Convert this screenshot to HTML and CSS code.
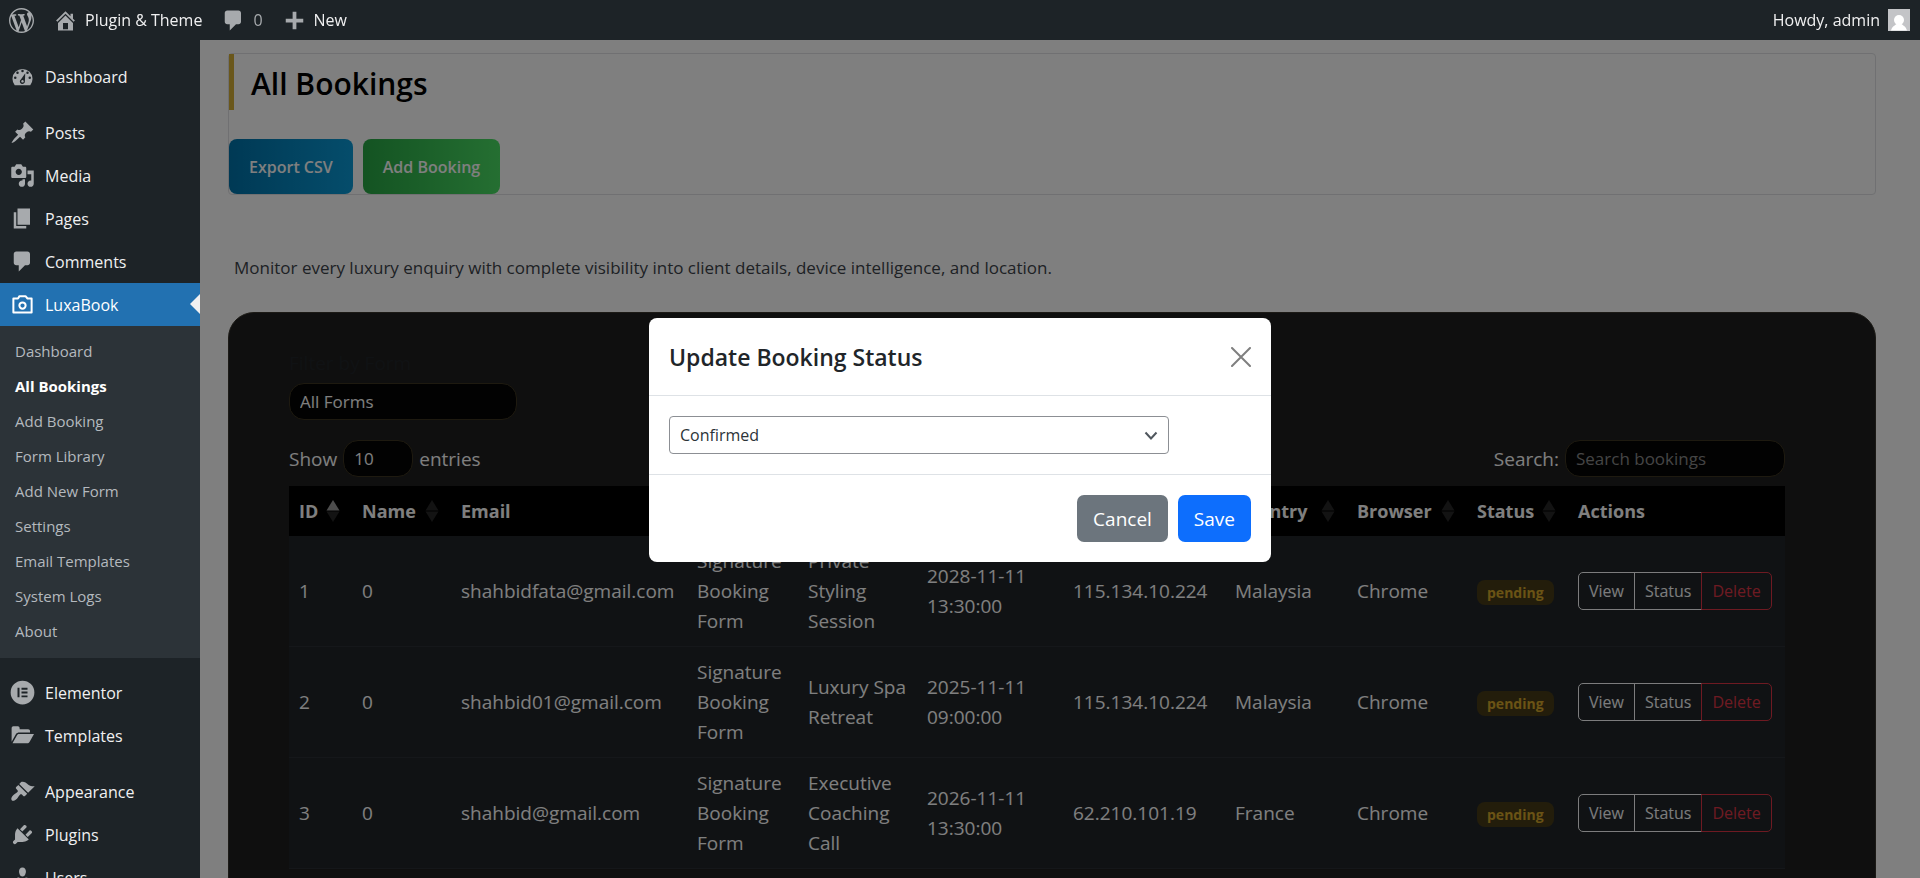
FILE: index.html
```html
<!DOCTYPE html>
<html lang="en">
<head>
<meta charset="utf-8">
<title>All Bookings</title>
<link rel="stylesheet" href="styles.css">
</head>
<body>
<header class="topbar">
  <nav class="topbar-links" aria-label="Toolbar">
    <a href="#" class="tb tb-logo" aria-label="About WordPress"><svg class="ico" viewBox="0 0 20 20"><path d="M20 10c0-5.51-4.49-10-10-10C4.48 0 0 4.49 0 10c0 5.52 4.48 10 10 10 5.51 0 10-4.48 10-10zM7.78 15.37L4.37 6.22c.55-.02 1.17-.08 1.17-.08.5-.06.44-1.13-.06-1.11 0 0-1.45.11-2.37.11-.18 0-.37 0-.58-.01C4.12 2.69 6.87 1.11 10 1.11c2.33 0 4.45.87 6.05 2.34-.68-.11-1.65.39-1.65 1.58 0 .74.45 1.36.9 2.1.35.61.55 1.36.55 2.46 0 1.49-1.4 5-1.4 5l-3.03-8.37c.54-.02.82-.17.82-.17.5-.05.44-1.25-.06-1.22 0 0-1.44.12-2.38.12-.87 0-2.33-.12-2.33-.12-.5-.03-.56 1.2-.06 1.22l.92.08 1.26 3.41zM17.41 10c.24-.64.74-1.87.43-4.25.7 1.29 1.05 2.71 1.05 4.25 0 3.29-1.73 6.24-4.4 7.78.97-2.59 1.94-5.2 2.92-7.78zM6.1 18.09C3.12 16.65 1.11 13.53 1.11 10c0-1.3.23-2.48.72-3.59C3.25 10.3 4.67 14.2 6.1 18.09zm4.03-6.63l2.58 6.98c-.86.29-1.76.45-2.71.45-.79 0-1.57-.11-2.29-.33.81-2.38 1.62-4.74 2.42-7.1z"/></svg></a>
    <a href="#" class="tb"><svg class="ico" viewBox="0 0 20 20"><path d="M16 8.5l1.53 1.53-1.06 1.06L10 4.6l-6.47 6.49-1.06-1.06L10 2.5l4 4v-2h2v4zm-6-2.46l6 5.99V18H4v-5.97zM12 17v-5H8v5h4z"/></svg><span>Plugin &amp; Theme</span></a>
    <a href="#" class="tb tb-count"><svg class="ico" viewBox="0 0 20 20"><path d="M5 2h9c1.1 0 2 .9 2 2v7c0 1.1-.9 2-2 2h-2l-5 5v-5H5c-1.1 0-2-.9-2-2V4c0-1.1.9-2 2-2z"/></svg><span>0</span></a>
    <a href="#" class="tb"><svg class="ico" viewBox="0 0 20 20"><path d="M17 8.500v3h-5.500v5.500h-3v-5.500H3v-3h5.500V3h3v5.500z"/></svg><span>New</span></a>
  </nav>
  <a href="#" class="tb tb-user"><span>Howdy, admin</span><svg class="avatar" viewBox="0 0 22 22"><path fill="#c3c4c7" d="M0 0h22v22H0z"/><circle cx="11" cy="11" r="5" fill="#fff"/><path fill="#fff" d="M3 21.500c1-4 4-5 5.500-6.500h5c1.500 1.500 4.500 2.500 5.500 6.500z"/></svg></a>
</header>

<nav class="sidebar" aria-label="Main menu">
  <ul class="menu">
    <li><a href="#" class="item"><svg class="ico" viewBox="0 0 20 20"><path fill-rule="evenodd" d="M3.800 17h12.400A8 8 0 1 0 3.800 17zM10 4.500a1 1 0 1 1 0 2 1 1 0 0 1 0-2zM6 6a1 1 0 1 1 0 2 1 1 0 0 1 0-2zM14 6a1 1 0 1 1 0 2 1 1 0 0 1 0-2zM4.200 10a1 1 0 1 1 0 2 1 1 0 0 1 0-2zM15.800 10a1 1 0 1 1 0 2 1 1 0 0 1 0-2zM12.200 7.300l-.3 6.500a2 2 0 1 1-3.200-1.500zM10 12.800a1 1 0 1 0 .01 0z"/></svg>Dashboard</a></li>
  </ul>
  <ul class="menu">
    <li><a href="#" class="item"><svg class="ico" viewBox="0 0 20 20"><path d="M10.440 3.020l1.820-1.820 6.360 6.350-1.830 1.820c-1.050-.68-2.480-.57-3.410.36l-.75.75c-.92.93-1.040 2.350-.35 3.410l-1.830 1.820-2.410-2.410-2.800 2.790c-.42.42-3.380 2.710-3.800 2.290s1.860-3.390 2.280-3.810l2.790-2.790L4.100 9.360l1.830-1.820c1.050.69 2.480.57 3.400-.36l.75-.75c.93-.92 1.050-2.350.36-3.410z"/></svg>Posts</a></li>
    <li><a href="#" class="item"><svg class="ico" viewBox="0 0 20 20"><path d="M13 11V4c0-.55-.45-1-1-1h-1.670L9 1H5L3.670 3H2c-.55 0-1 .45-1 1v7c0 .55.45 1 1 1h10c.55 0 1-.45 1-1zM7 4.500c1.380 0 2.500 1.120 2.500 2.500S8.380 9.500 7 9.500 4.500 8.380 4.500 7 5.620 4.500 7 4.500zM14 6h5v10.500c0 1.380-1.120 2.500-2.500 2.500S14 17.880 14 16.500s1.120-2.500 2.500-2.500c.17 0 .34.02.5.05V9h-3V6zm-4 8.050V13h2v3.500c0 1.380-1.120 2.500-2.500 2.500S7 17.880 7 16.500 8.120 14 9.500 14c.17 0 .34.02.5.05z"/></svg>Media</a></li>
    <li><a href="#" class="item"><svg class="ico" viewBox="0 0 20 20"><path d="M6 15V2h10v13H6zm-1 1h8v2H3V5h2v11z"/></svg>Pages</a></li>
    <li><a href="#" class="item"><svg class="ico" viewBox="0 0 20 20"><path d="M5 2h9c1.100 0 2 .9 2 2v7c0 1.100-.9 2-2 2h-2l-5 5v-5H5c-1.100 0-2-.9-2-2V4c0-1.100.9-2 2-2z"/></svg>Comments</a></li>
    <li><a href="#" class="item item-current" aria-current="true"><svg class="ico ico-line" viewBox="0 0 20 20"><path d="M2.700 5.200h3.700l1.200-1.900h4.800l1.600 1.900h3.300v11.100H2.700z"/><circle cx="10" cy="10.800" r="2.500"/></svg>LuxaBook</a>
      <ul class="submenu">
        <li><a href="#">Dashboard</a></li>
        <li><a href="#" class="on" aria-current="page">All Bookings</a></li>
        <li><a href="#">Add Booking</a></li>
        <li><a href="#">Form Library</a></li>
        <li><a href="#">Add New Form</a></li>
        <li><a href="#">Settings</a></li>
        <li><a href="#">Email Templates</a></li>
        <li><a href="#">System Logs</a></li>
        <li><a href="#">About</a></li>
      </ul>
    </li>
  </ul>
  <ul class="menu">
    <li><a href="#" class="item"><svg class="ico" viewBox="0 0 20 20"><path fill-rule="evenodd" d="M10 .5a9.500 9.500 0 1 1 0 19 9.500 9.500 0 0 1 0-19zM6 6.200v7.600h1.600V6.200zm3.200 0v1.500H14V6.200zm0 3v1.500H14V9.200zm0 3.100v1.500H14v-1.500z"/></svg>Elementor</a></li>
    <li><a href="#" class="item"><svg class="ico" viewBox="0 0 20 20"><path d="M1.300 15V4c0-.8.6-1.500 1.400-1.500h3.600c.8 0 1.400.7 1.400 1.500v1h6.800c.9 0 1.500.6 1.500 1.400v1.200H7.300c-1 0-1.900.4-2.500 1.200z"/><path d="M2 16.200l3.600-6.400c.4-.7.900-1 1.700-1h11.900l-3.600 6.300c-.4.700-1 1.100-1.800 1.100z"/></svg>Templates</a></li>
  </ul>
  <ul class="menu">
    <li><a href="#" class="item"><svg class="ico" viewBox="0 0 20 20"><path d="M14.480 11.060L7.410 3.990l1.500-1.500c.5-.56 2.300-.47 3.510.32 1.210.8 1.430 1.280 2.910 2.100 1.180.64 2.450 1.260 4.450.85zm-.71.71L6.700 4.700 4.930 6.470c-.39.39-.39 1.020 0 1.410l1.060 1.060c.39.39.39 1.030 0 1.420-.6.6-1.430 1.110-2.210 1.690-.35.26-.7.53-1.010.84C1.430 14.230.4 16.080 1.400 17.070c.99 1 2.840-.03 4.180-1.360.31-.31.58-.66.85-1.020.57-.78 1.080-1.610 1.690-2.210.39-.39 1.020-.39 1.410 0l1.060 1.060c.39.39 1.020.39 1.410 0z"/></svg>Appearance</a></li>
    <li><a href="#" class="item"><svg class="ico" viewBox="0 0 20 20"><path d="M13.110 4.360L9.870 7.600 8 5.730l3.240-3.240c.35-.34 1.050-.2 1.560.32.52.51.66 1.210.31 1.550zm-8 1.770l.91-1.120 9.010 9.010-1.190.84c-.71.71-2.630 1.160-3.820 1.160H6.140L4.900 17.260c-.59.59-1.540.59-2.120 0-.59-.58-.59-1.530 0-2.120l1.240-1.240v-3.880c0-1.130.4-3.190 1.090-3.890zm7.260 3.970l3.240-3.240c.34-.35 1.040-.21 1.550.31.52.51.66 1.210.31 1.550l-3.240 3.250z"/></svg>Plugins</a></li>
    <li><a href="#" class="item"><svg class="ico" viewBox="0 0 20 20"><path d="M10 9.250c-2.270 0-2.730-3.440-2.730-3.440C7 4.020 7.820 2 9.970 2c2.160 0 2.980 2.020 2.710 3.810 0 0-.41 3.440-2.680 3.440zm0 2.570L12.720 10c2.390 0 4.520 2.330 4.520 4.530v2.490s-3.650 1.130-7.240 1.130c-3.650 0-7.240-1.130-7.240-1.130v-2.490c0-2.250 1.940-4.480 4.470-4.480z"/></svg>Users</a></li>
  </ul>
</nav>

<main class="content">
  <section class="page-head">
    <h1 class="page-title">All Bookings</h1>
    <div class="page-actions">
      <button type="button" class="cta cta-blue">Export CSV</button>
      <button type="button" class="cta cta-green">Add Booking</button>
    </div>
  </section>
  <p class="intro">Monitor every luxury enquiry with complete visibility into client details, device intelligence, and location.</p>

  <section class="panel">
    <div class="filter">
      <label for="form-filter" class="filter-label">Filter by Form</label>
      <select id="form-filter" class="dark-field filter-select"><option>All Forms</option></select>
    </div>
    <div class="controls">
      <div class="length">
        <label for="page-length">Show</label>
        <select id="page-length" class="dark-field length-select"><option>10</option></select>
        <span>entries</span>
      </div>
      <div class="search">
        <label for="search">Search:</label>
        <input id="search" type="search" class="dark-field search-input" placeholder="Search bookings">
      </div>
    </div>
    <table class="bookings">
      <colgroup><col class="c-id"><col class="c-name"><col class="c-email"><col class="c-form"><col class="c-service"><col class="c-date"><col class="c-ip"><col class="c-country"><col class="c-browser"><col class="c-status"><col class="c-actions"></colgroup>
      <thead>
        <tr>
          <th><div class="th">ID<svg class="sort sort-asc" viewBox="0 0 14 22"><path class="up" d="M7 0l6.500 10.500H.5z"/><path class="down" d="M7 22L.5 11.500h13z"/></svg></div></th>
          <th><div class="th">Name<svg class="sort" viewBox="0 0 14 22"><path class="up" d="M7 0l6.500 10.500H.5z"/><path class="down" d="M7 22L.5 11.500h13z"/></svg></div></th>
          <th><div class="th">Email<svg class="sort" viewBox="0 0 14 22"><path class="up" d="M7 0l6.500 10.500H.5z"/><path class="down" d="M7 22L.5 11.500h13z"/></svg></div></th>
          <th><div class="th">Form<svg class="sort" viewBox="0 0 14 22"><path class="up" d="M7 0l6.500 10.500H.5z"/><path class="down" d="M7 22L.5 11.500h13z"/></svg></div></th>
          <th><div class="th">Service<svg class="sort" viewBox="0 0 14 22"><path class="up" d="M7 0l6.500 10.500H.5z"/><path class="down" d="M7 22L.5 11.500h13z"/></svg></div></th>
          <th><div class="th">Date<svg class="sort" viewBox="0 0 14 22"><path class="up" d="M7 0l6.500 10.500H.5z"/><path class="down" d="M7 22L.5 11.500h13z"/></svg></div></th>
          <th><div class="th">IP<svg class="sort" viewBox="0 0 14 22"><path class="up" d="M7 0l6.500 10.500H.5z"/><path class="down" d="M7 22L.5 11.500h13z"/></svg></div></th>
          <th><div class="th">Country<svg class="sort" viewBox="0 0 14 22"><path class="up" d="M7 0l6.500 10.500H.5z"/><path class="down" d="M7 22L.5 11.500h13z"/></svg></div></th>
          <th><div class="th">Browser<svg class="sort" viewBox="0 0 14 22"><path class="up" d="M7 0l6.500 10.500H.5z"/><path class="down" d="M7 22L.5 11.500h13z"/></svg></div></th>
          <th><div class="th">Status<svg class="sort" viewBox="0 0 14 22"><path class="up" d="M7 0l6.500 10.500H.5z"/><path class="down" d="M7 22L.5 11.500h13z"/></svg></div></th>
          <th><div class="th">Actions</div></th>
        </tr>
      </thead>
      <tbody>
        <tr>
          <td>1</td><td>0</td><td>shahbidfata@gmail.com</td><td>Signature Booking Form</td><td>Private Styling Session</td><td>2028-11-11 13:30:00</td><td>115.134.10.224</td><td>Malaysia</td><td>Chrome</td><td><span class="badge">pending</span></td>
          <td><div class="group"><button type="button" class="act">View</button><button type="button" class="act">Status</button><button type="button" class="act act-danger">Delete</button></div></td>
        </tr>
        <tr>
          <td>2</td><td>0</td><td>shahbid01@gmail.com</td><td>Signature Booking Form</td><td>Luxury Spa Retreat</td><td>2025-11-11 09:00:00</td><td>115.134.10.224</td><td>Malaysia</td><td>Chrome</td><td><span class="badge">pending</span></td>
          <td><div class="group"><button type="button" class="act">View</button><button type="button" class="act">Status</button><button type="button" class="act act-danger">Delete</button></div></td>
        </tr>
        <tr>
          <td>3</td><td>0</td><td>shahbid@gmail.com</td><td>Signature Booking Form</td><td>Executive Coaching Call</td><td>2026-11-11 13:30:00</td><td>62.210.101.19</td><td>France</td><td>Chrome</td><td><span class="badge">pending</span></td>
          <td><div class="group"><button type="button" class="act">View</button><button type="button" class="act">Status</button><button type="button" class="act act-danger">Delete</button></div></td>
        </tr>
      </tbody>
    </table>
  </section>
</main>

<div class="backdrop">
  <div class="modal" role="dialog" aria-modal="true" aria-labelledby="modal-title">
    <div class="modal-head">
      <h2 id="modal-title" class="modal-title">Update Booking Status</h2>
      <button type="button" class="close" aria-label="Close"><svg class="close-ico" viewBox="0 0 20 20"><path d="M1 1l18 18M19 1L1 19"/></svg></button>
    </div>
    <div class="modal-body">
      <div class="select-wrap">
        <select class="status-select" aria-label="Booking status"><option>Confirmed</option></select>
        <svg class="chevron" viewBox="0 0 14 10"><path d="M1.500 1.500L7 7.500l5.500-6"/></svg>
      </div>
    </div>
    <div class="modal-foot">
      <button type="button" class="btn btn-grey">Cancel</button>
      <button type="button" class="btn btn-blue">Save</button>
    </div>
  </div>
</div>
</body>
</html>
```

FILE: styles.css
```css
* { box-sizing: border-box; }

html, body { height: 100%; }

body {
  margin: 0;
  overflow: hidden;
  background: #fff;
  color: #3c434a;
  font-family: "Open Sans", "Noto Sans", sans-serif;
  font-size: 16px;
}

button, input, select { font-family: inherit; margin: 0; }
a { text-decoration: none; color: inherit; }
ul { list-style: none; margin: 0; padding: 0; }

/* Toolbar */
.topbar {
  position: fixed;
  inset: 0 0 auto 0;
  z-index: 30;
  display: flex;
  justify-content: space-between;
  height: 40px;
  padding: 0 10px 0 9px;
  background: #1d2327;
  color: #f0f0f1;
  font-size: 16px;
}
.topbar-links { display: flex; gap: 19px; }
.tb { display: flex; align-items: center; gap: 7px; }
.tb-user { gap: 8px; }
.tb-count { color: #a7aaad; }
.ico { width: 25px; height: 25px; flex: none; fill: #a7aaad; }
.avatar { width: 22px; height: 22px; }

/* Sidebar */
.sidebar {
  position: fixed;
  inset: 40px auto 0 0;
  z-index: 20;
  display: flex;
  flex-direction: column;
  gap: 13px;
  width: 200px;
  padding-top: 15px;
  overflow: hidden;
  background: #1d2327;
}
.item {
  position: relative;
  display: flex;
  align-items: center;
  gap: 10px;
  height: 43px;
  padding-left: 10px;
  color: #f0f0f1;
  font-size: 16px;
}
.item-current { background: #2271b1; color: #fff; }
.item-current::after {
  content: "";
  position: absolute;
  right: 0;
  top: 11px;
  border: 10px solid transparent;
  border-left: 0;
  border-right-color: #f0f0f1;
}
.ico-line { fill: none; stroke: #fff; stroke-width: 1.6; stroke-linejoin: round; }
.submenu { padding: 7px 0 10px; background: #2c3338; }
.submenu a {
  display: flex;
  align-items: center;
  height: 35px;
  padding-left: 15px;
  color: #b4b9be;
  font-size: 15px;
}
.submenu .on { color: #fff; font-weight: 700; }

/* Page */
.content { padding: 53px 44px 0 228px; }
.page-head {
  border: 1px solid #e0e1e4;
  border-radius: 4px;
}
.page-title {
  margin: 0 0 29px;
  padding: 9px 17px 5px;
  border-left: 5px solid #d4af37;
  color: #000;
  font-size: 30px;
  font-weight: 600;
  line-height: 42px;
}
.page-actions { display: flex; gap: 10px; }
.cta {
  height: 55px;
  padding: 0 20px;
  border: 0;
  border-radius: 8px;
  color: #fff;
  font-size: 16px;
  font-weight: 600;
}
.cta-blue { background: linear-gradient(90deg, #0073aa, #0a9ad7); }
.cta-green { background: linear-gradient(90deg, #28a745, #4ade64); }
.intro {
  margin: 59px 0 30px 6px;
  font-size: 17px;
  line-height: 28px;
}

.panel {
  padding: 35px 90px 60px 60px;
  border: 1px solid #38352c;
  border-radius: 26px;
  background: #1e1e1e;
  color: #fff;
  font-size: 19px;
}
.filter { display: flex; flex-direction: column; align-items: flex-start; gap: 4px; }
.filter-label { color: #212529; line-height: 31px; }
.dark-field {
  appearance: none;
  height: 37px;
  padding: 0 10px;
  border: 1px solid #3d3520;
  border-radius: 15px;
  background: #050505;
  color: #fff;
  font-size: 17px;
}
.dark-field::placeholder { color: #8a8a8a; opacity: 1; }
.filter-select { width: 228px; }
.controls {
  display: flex;
  justify-content: space-between;
  padding: 20px 0 9px;
}
.length, .search { display: flex; align-items: center; gap: 6px; }
.length-select { width: 70px; }
.search-input { width: 220px; }

.bookings {
  width: 100%;
  table-layout: fixed;
  border-collapse: collapse;
  line-height: 30px;
}
.c-id { width: 63px; }
.c-name { width: 99px; }
.c-email { width: 236px; }
.c-form { width: 111px; }
.c-service { width: 119px; }
.c-date { width: 146px; }
.c-ip { width: 162px; }
.c-country { width: 122px; }
.c-browser { width: 120px; }
.c-status { width: 101px; }
.c-actions { width: 217px; }
.bookings th {
  padding: 10px 12px 10px 10px;
  background: #000;
  font-size: 18px;
  font-weight: 700;
  text-align: left;
}
.th { display: flex; align-items: center; justify-content: space-between; }
.sort { width: 14px; height: 22px; flex: none; fill: #262626; }
.sort-asc .up { fill: #9a9a9a; }
.bookings td {
  padding: 10px;
  border-bottom: 1px solid #2b2f34;
  background: #212529;
  vertical-align: middle;
}
.badge {
  display: inline-block;
  padding: 0 10px;
  border-radius: 8px;
  background: #473b17;
  color: #d4a62a;
  font-size: 14px;
  font-weight: 700;
  line-height: 25px;
}
.group { display: flex; }
.act {
  height: 38px;
  padding: 0 10px;
  border: 1px solid #f8f9fa;
  background: transparent;
  color: #f8f9fa;
  font-size: 16px;
}
.act + .act { margin-left: -1px; }
.act:first-child { border-radius: 5px 0 0 5px; }
.act:last-child { border-radius: 0 5px 5px 0; }
.act-danger { border-color: #dc3545; color: #dc3545; }

/* Dialog */
.backdrop {
  position: fixed;
  inset: 0;
  z-index: 10;
  display: flex;
  align-items: center;
  justify-content: center;
  padding-top: 2px;
  background: rgba(0, 0, 0, 0.5);
}
.modal {
  width: 100%;
  max-width: 622px;
  border-radius: 8px;
  background: #fff;
  color: #212529;
}
.modal-head {
  display: flex;
  align-items: center;
  justify-content: space-between;
  padding: 20px;
  border-bottom: 1px solid #dee2e6;
}
.modal-title { margin: 0; padding-top: 2px; font-size: 23px; font-weight: 600; line-height: 35px; }
.close { display: flex; padding: 0; border: 0; background: none; }
.close-ico { width: 20px; height: 20px; fill: none; stroke: #7f7f7f; stroke-width: 2; stroke-linecap: round; }
.modal-body { padding: 20px; }
.select-wrap { position: relative; width: 500px; max-width: 100%; }
.status-select {
  appearance: none;
  display: block;
  width: 100%;
  height: 38px;
  padding: 0 10px;
  border: 1px solid #8c8f94;
  border-radius: 4px;
  background: #fff;
  color: #2c3338;
  font-size: 16px;
}
.chevron {
  position: absolute;
  right: 11px;
  top: 15px;
  width: 14px;
  height: 10px;
  fill: none;
  stroke: #50575e;
  stroke-width: 2;
  pointer-events: none;
}
.modal-foot {
  display: flex;
  justify-content: flex-end;
  gap: 10px;
  padding: 20px;
  border-top: 1px solid #dee2e6;
}
.btn {
  height: 47px;
  padding: 0 16px;
  border: 0;
  border-radius: 7px;
  color: #fff;
  font-size: 19px;
}
.btn-grey { background: #6c757d; }
.btn-blue { background: #0d6efd; }
```
